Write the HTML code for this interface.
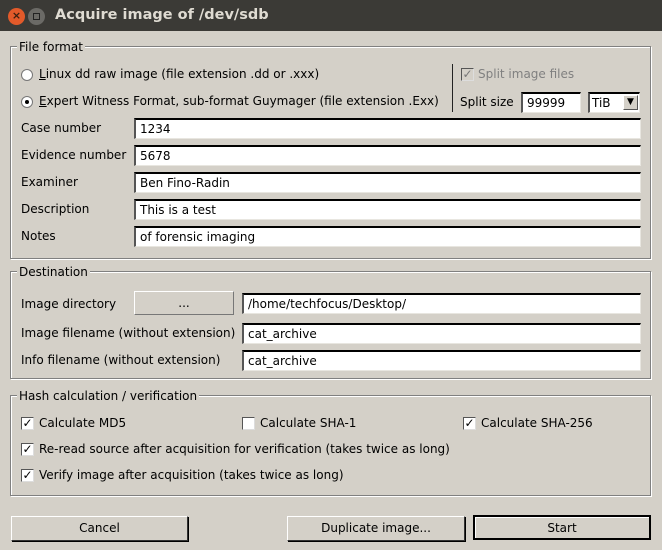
<!DOCTYPE html>
<html><head><meta charset="utf-8"><style>
*{box-sizing:border-box;margin:0;padding:0}
body{width:662px;height:550px;background:#d4d0c8;font-family:"DejaVu Sans","Liberation Sans",sans-serif;font-size:12px;color:#000;position:relative;overflow:hidden}
.a{position:absolute;white-space:nowrap}
.t{margin-top:1px}
.title{left:0;top:0;width:662px;height:31px;background:#3b3a36;color:#dfdbd2;font-weight:bold;font-size:14.5px}
.grp{position:absolute;border:1px solid #808080;box-shadow:1px 1px 0 #fff,inset 1px 1px 0 #fff}
.lg{position:absolute;background:#d4d0c8;padding:0 2px;line-height:14px}
.in{position:absolute;height:21px;background:#fff;border-top:2px solid #000;border-left:2px solid #555;border-right:1px solid #e8e6e0;border-bottom:1px solid #e8e6e0;padding-left:4px;line-height:18px}
.btn{position:absolute;height:25px;border:1px solid #333;border-top-color:#fff;border-left-color:#fff;box-shadow:1px 1px 0 #000;background:#d4d0c8;text-align:center;line-height:23px}
.cb{position:absolute;width:13px;height:13px;background:#fff;border-top:1px solid #555;border-left:1px solid #555;border-right:1px solid #ddd;border-bottom:1px solid #ddd;font-size:12px;line-height:11px;text-align:center;font-weight:bold}
.rd{position:absolute;width:12px;height:12px;border-radius:50%;background:#fff;border:1px solid #777}
.lb{position:absolute;white-space:nowrap;top:0}
</style></head><body>
<div class="a title"><div class="a" style="left:8px;top:8px;width:17px;height:17px;border-radius:50%;background:#e35a2a;color:#3b2010;font-size:11px;text-align:center;line-height:16px">×</div>
<div class="a" style="left:28px;top:8px;width:17px;height:17px;border-radius:50%;background:#6b6a66"><div class="a" style="left:5px;top:5px;width:7px;height:7px;border:1px solid #222"></div></div>
<div class="a" style="left:55px;top:7px">Acquire image of /dev/sdb</div></div>

<div class="grp" style="left:10px;top:46px;width:641px;height:213px"></div>
<div class="lg" style="left:17px;top:40px">File format</div>
<div class="rd" style="left:21px;top:69px"></div>
<div class="a" style="left:39px;top:67px"><u>L</u>inux dd raw image (file extension .dd or .xxx)</div>
<div class="rd" style="left:21px;top:96px"><div class="a" style="left:3px;top:3px;width:4px;height:4px;border-radius:50%;background:#000"></div></div>
<div class="a" style="left:39px;top:94px"><u>E</u>xpert Witness Format, sub-format Guymager (file extension .Exx)</div>
<div class="a" style="left:452px;top:64px;width:1px;height:48px;background:#222"></div>
<div class="cb" style="left:461px;top:68px;background:#d4d0c8;color:#777">✓</div>
<div class="a" style="left:478px;top:67px;color:#808080">Split image files</div>
<div class="a" style="left:460px;top:95px">Split size</div>
<div class="in" style="left:521px;top:92px;width:60px">99999</div>
<div class="in" style="left:588px;top:92px;width:52px;padding-left:2px">TiB<div class="a" style="right:1px;top:1px;width:15px;height:15px;border:1px solid #555;border-top-color:#fff;border-left-color:#fff;background:#d4d0c8;font-size:9px;line-height:13px;text-align:center">▼</div></div>

<div class="a" style="left:21px;top:121px">Case number</div><div class="in" style="left:134px;top:118px;width:507px">1234</div>
<div class="a" style="left:21px;top:148px">Evidence number</div><div class="in" style="left:134px;top:145px;width:507px">5678</div>
<div class="a" style="left:21px;top:175px">Examiner</div><div class="in" style="left:134px;top:172px;width:507px">Ben Fino-Radin</div>
<div class="a" style="left:21px;top:202px">Description</div><div class="in" style="left:134px;top:199px;width:507px">This is a test</div>
<div class="a" style="left:21px;top:229px">Notes</div><div class="in" style="left:134px;top:226px;width:507px">of forensic imaging</div>

<div class="grp" style="left:10px;top:271px;width:641px;height:108px"></div>
<div class="lg" style="left:17px;top:265px">Destination</div>
<div class="a" style="left:21px;top:297px">Image directory</div>
<div class="btn" style="left:134px;top:291px;width:100px;height:24px;box-shadow:none;border-color:#fff #777 #777 #fff">...</div>
<div class="in" style="left:242px;top:293px;width:399px">/home/techfocus/Desktop/</div>
<div class="a" style="left:21px;top:326px">Image filename (without extension)</div>
<div class="in" style="left:242px;top:323px;width:399px">cat_archive</div>
<div class="a" style="left:21px;top:353px">Info filename (without extension)</div>
<div class="in" style="left:242px;top:350px;width:399px">cat_archive</div>

<div class="grp" style="left:10px;top:395px;width:641px;height:101px"></div>
<div class="lg" style="left:17px;top:389px">Hash calculation / verification</div>
<div class="cb" style="left:21px;top:417px">✓</div><div class="a" style="left:39px;top:416px">Calculate MD5</div>
<div class="cb" style="left:242px;top:417px"></div><div class="a" style="left:260px;top:416px">Calculate SHA-1</div>
<div class="cb" style="left:463px;top:417px">✓</div><div class="a" style="left:481px;top:416px">Calculate SHA-256</div>
<div class="cb" style="left:21px;top:443px">✓</div><div class="a" style="left:39px;top:442px">Re-read source after acquisition for verification (takes twice as long)</div>
<div class="cb" style="left:21px;top:469px">✓</div><div class="a" style="left:39px;top:468px">Verify image after acquisition (takes twice as long)</div>

<div class="btn" style="left:11px;top:516px;width:177px">Cancel</div>
<div class="btn" style="left:287px;top:516px;width:178px">Duplicate image...</div>
<div class="btn" style="left:473px;top:515px;width:178px;border:2px solid #000;border-top-color:#000;box-shadow:inset 1px 1px 0 #fff">Start</div>
</body></html>
